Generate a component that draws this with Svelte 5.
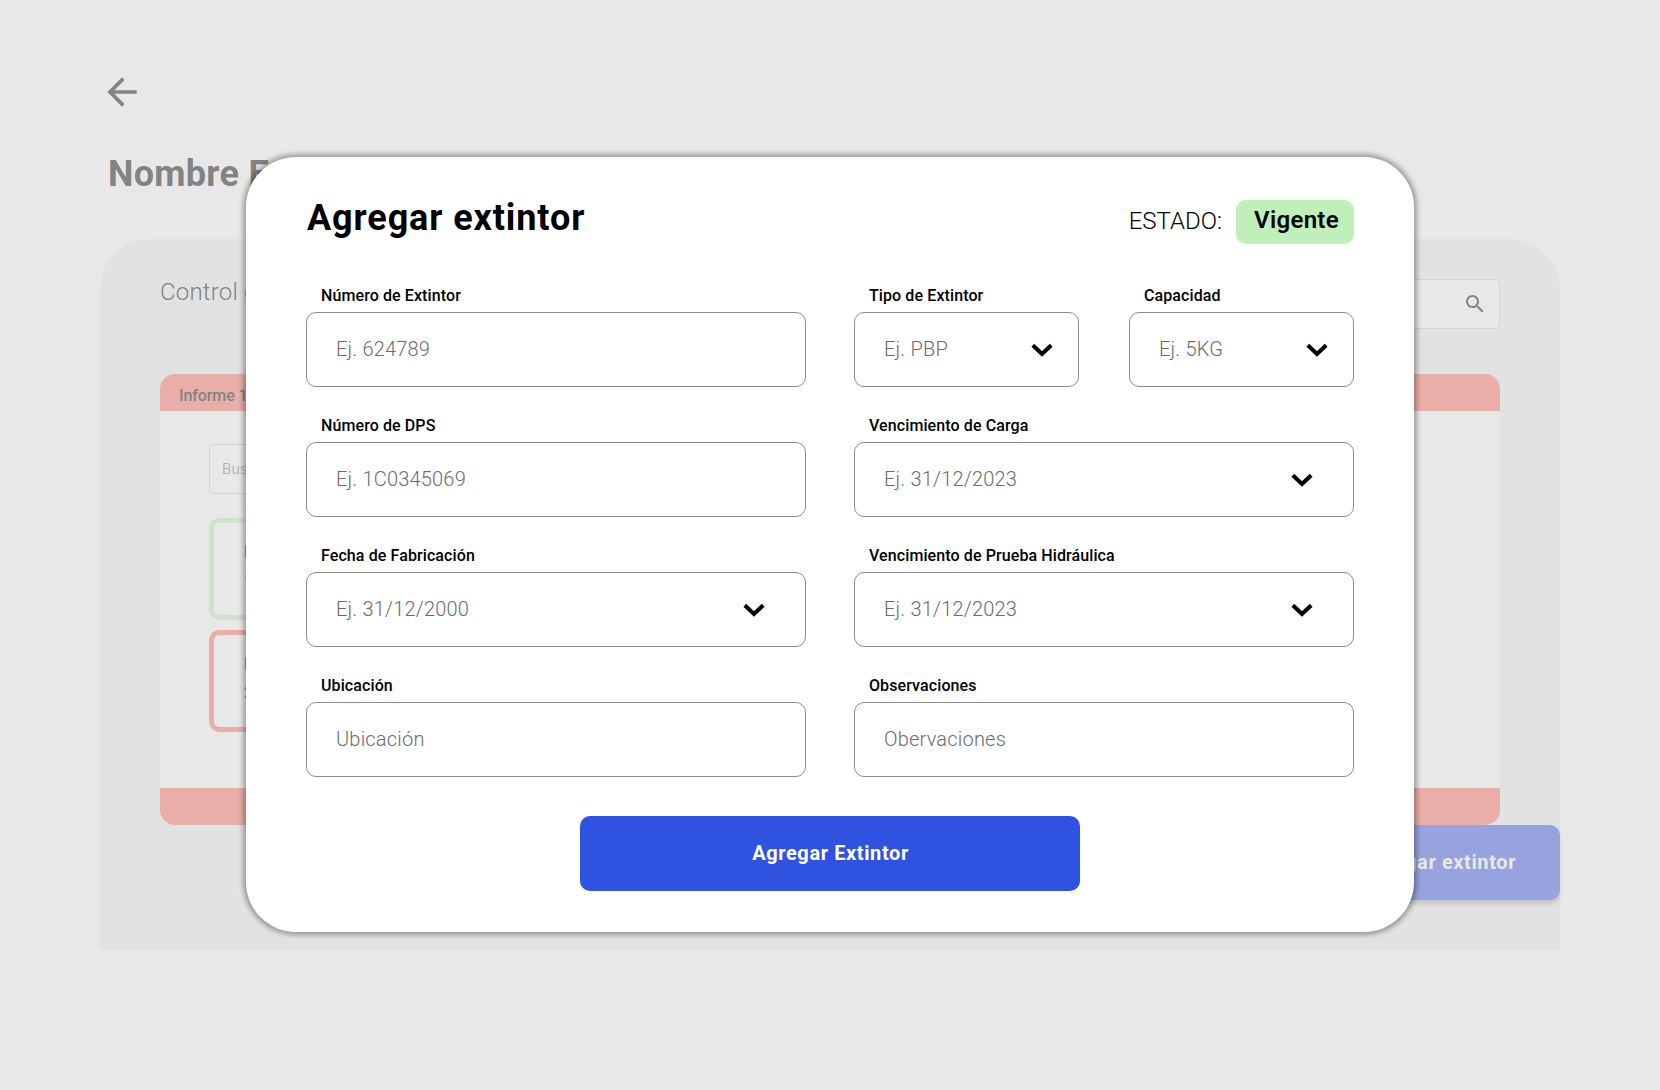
<script>
  const fields = [
    { label: 'Número de Extintor', hint: 'Ej. 624789', size: 'wide' },
    { label: 'Tipo de Extintor', hint: 'Ej. PBP', size: 'small', select: true },
    { label: 'Capacidad', hint: 'Ej. 5KG', size: 'small', select: true },
    { label: 'Número de DPS', hint: 'Ej. 1C0345069', size: 'wide' },
    { label: 'Vencimiento de Carga', hint: 'Ej. 31/12/2023', size: 'wide', select: true },
    { label: 'Fecha de Fabricación', hint: 'Ej. 31/12/2000', size: 'wide', select: true },
    { label: 'Vencimiento de Prueba Hidráulica', hint: 'Ej. 31/12/2023', size: 'wide', select: true },
    { label: 'Ubicación', hint: 'Ubicación', size: 'wide' },
    { label: 'Observaciones', hint: 'Obervaciones', size: 'wide' }
  ];
  const reports = [
    { state: 'ok', name: 'N', number: '1' },
    { state: 'expired', name: 'N', number: '2' }
  ];
</script>

<div class="screen">
  <div class="page">
    <svg class="back" viewBox="0 0 24 24"><path d="M20 11H7.83l5.59-5.59L12 4l-8 8 8 8 1.41-1.41L7.83 13H20v-2z" /></svg>
    <h1>Nombre E</h1>
    <section class="panel">
      <header class="panel-head">
        <span class="panel-title">Control de</span>
        <div class="search">
          <svg viewBox="0 0 24 24"><path d="M15.5 14h-.79l-.28-.27C15.41 12.59 16 11.11 16 9.5 16 5.91 13.09 3 9.5 3S3 5.91 3 9.5 5.91 16 9.5 16c1.61 0 3.09-.59 4.23-1.57l.27.28v.79l5 4.99L20.49 19l-4.99-5zm-6 0C7.01 14 5 11.99 5 9.5S7.01 5 9.5 5 14 7.01 14 9.5 11.99 14 9.5 14z" /></svg>
        </div>
      </header>
      <div class="card">
        <div class="card-top">Informe 1</div>
        <div class="card-body">
          <div class="filter">Buscar</div>
          {#each reports as r}
            <div class="report {r.state}"><span>{r.name}</span><span>{r.number}</span></div>
          {/each}
        </div>
        <div class="card-foot"></div>
      </div>
      <button class="page-action">Agregar extintor</button>
    </section>
  </div>

  <div class="overlay">
    <div class="modal">
      <header class="modal-head">
        <h2>Agregar extintor</h2>
        <div class="status"><span>ESTADO:</span><b>Vigente</b></div>
      </header>
      <div class="form">
        {#each fields as f}
          <div class="field {f.size}">
            <span class="label">{f.label}</span>
            <div class="box">
              <span class="hint">{f.hint}</span>
              {#if f.select}
                <svg class="chevron" viewBox="0 0 22 14"><path d="M1.8 2.2 11 11l9.2-8.8" /></svg>
              {/if}
            </div>
          </div>
        {/each}
      </div>
      <button class="submit">Agregar Extintor</button>
    </div>
  </div>
</div>

<style>
  :global(body) { background: #e8e8e8; }
  .screen {
    position: relative;
    width: 1660px;
    height: 1090px;
    overflow: hidden;
    font-family: Roboto, "Liberation Sans", sans-serif;
    color: #000;
  }
  .screen * { box-sizing: border-box; }
  h1, h2 { margin: 0; }
  button { font-family: inherit; border: 0; padding: 0; }

  .page { padding: 70px 100px 0 99.5px; }
  .back { display: block; width: 44px; height: 44px; fill: #838383; }
  h1 {
    margin: 39px 0 0 8.5px;
    height: 42px;
    font-size: 36px;
    line-height: 42px;
    font-weight: 700;
    letter-spacing: 0.3px;
    color: #838383;
  }
  .panel {
    margin: 44px 0 0 0.5px;
    height: 711px;
    padding: 40px 0 0 60px;
    border-radius: 50px 50px 0 0;
    background: #e2e2e2;
    display: flex;
    flex-direction: column;
  }
  .panel-head { display: flex; justify-content: space-between; margin-right: 60px; height: 50px; }
  .panel-title { font-size: 24px; line-height: 26px; font-weight: 300; letter-spacing: 0.2px; color: #838383; }
  .search {
    width: 320px;
    height: 50px;
    padding: 12px;
    display: flex;
    justify-content: flex-end;
    border: 1px solid #d2d2d2;
    border-radius: 5px;
    background: #e8e8e8;
  }
  .search svg { width: 24px; height: 24px; fill: #838383; }
  .card {
    margin: 45px 60px 0 0;
    height: 451px;
    flex: none;
    display: flex;
    flex-direction: column;
    border-radius: 15px;
    overflow: hidden;
    background: #e8e8e8;
  }
  .card-top {
    height: 37px;
    padding: 4px 19px 0;
    line-height: 35px;
    font-size: 16px;
    font-weight: 500;
    letter-spacing: -0.1px;
    background: #e8aea7;
    color: #838383;
  }
  .card-foot { height: 37px; background: #e8aea7; }
  .card-body { flex: 1; padding: 33px 49px 0; }
  .filter {
    width: 300px;
    height: 50px;
    padding-left: 12px;
    line-height: 49px;
    font-size: 15px;
    font-weight: 300;
    letter-spacing: 0.3px;
    border: 1px solid #d2d2d2;
    border-radius: 5px;
    color: #a6a6a6;
    margin-bottom: 24px;
  }
  .report {
    width: 500px;
    height: 102px;
    margin-bottom: 10px;
    padding: 19px 30px;
    border: 5px solid;
    border-radius: 10px;
    display: flex;
    flex-direction: column;
    gap: 9px;
    font-size: 16px;
    line-height: 20px;
    font-weight: 500;
  }
  .report span { color: #838383; }
  .report.ok { border-color: #cfe2cb; }
  .report.expired { border-color: #e8aea7; }
  .page-action {
    align-self: flex-end;
    flex: none;
    width: 244px;
    height: 75px;
    padding-bottom: 2px;
    border-radius: 10px;
    background: #96a3de;
    color: #e8e8e8;
    font-size: 20px;
    font-weight: 700;
    letter-spacing: 0.6px;
    box-shadow: 0 4px 4px rgba(0, 0, 0, 0.12);
  }

  .overlay {
    position: absolute;
    inset: 0;
    display: flex;
    justify-content: center;
    align-items: flex-start;
    padding-top: 157px;
  }
  .modal {
    width: 1168px;
    height: 775px;
    padding: 43px 60px 0;
    border-radius: 50px;
    background: #fff;
    box-shadow: 0 0 5px 3px rgba(0, 0, 0, 0.32);
    display: flex;
    flex-direction: column;
    align-items: center;
  }
  .modal-head {
    align-self: stretch;
    height: 44px;
    display: flex;
    justify-content: space-between;
  }
  h2 { padding-left: 1px; font-size: 36px; line-height: 36px; font-weight: 700; letter-spacing: 0.9px; }
  .status { display: flex; gap: 14px; font-size: 24px; line-height: 43px; }
  .status span { font-weight: 300; }
  .status b {
    width: 118px;
    height: 44px;
    padding-left: 3px;
    line-height: 41px;
    text-align: center;
    font-weight: 600;
    letter-spacing: 0.3px;
    border-radius: 10px;
    background: #c1efb9;
  }
  .form {
    width: 1048px;
    margin-top: 40px;
    display: grid;
    grid-template-columns: 548px 275px 225px;
    row-gap: 27px;
  }
  .field { height: 103px; display: flex; flex-direction: column; }
  .field:nth-child(5),
  .field:nth-child(7),
  .field:nth-child(9) { grid-column: 2 / 4; }
  .wide { width: 500px; }
  .small { width: 225px; }
  .label {
    height: 28px;
    padding-left: 15px;
    line-height: 24px;
    font-size: 16px;
    font-weight: 500;
    letter-spacing: 0.1px;
  }
  .box {
    height: 75px;
    padding: 0 40px 0 29px;
    display: flex;
    justify-content: space-between;
    align-items: center;
    border: 1px solid #8c8c8c;
    border-radius: 10px;
  }
  .small .box { padding-right: 25px; }
  .hint {
    padding-bottom: 2px;
    font-size: 20px;
    line-height: 24px;
    font-weight: 300;
    letter-spacing: 0.2px;
    color: #6b6b6b;
  }
  .chevron { width: 22px; height: 14px; fill: none; stroke: #000; stroke-width: 4; }
  .submit {
    width: 500px;
    height: 75px;
    margin-top: 39px;
    padding: 0 0 2px 1px;
    border-radius: 10px;
    background: #2f52e0;
    color: #fff;
    font-size: 20px;
    font-weight: 700;
    letter-spacing: 0.6px;
  }
</style>
